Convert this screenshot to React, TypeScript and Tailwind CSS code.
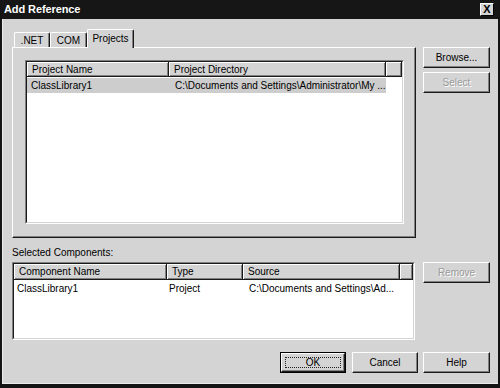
import React from 'react';

const font = { fontFamily: '"Liberation Sans", Arial, sans-serif' };

function Button({ label, disabled = false, isDefault = false, className = '' }: { label: string; disabled?: boolean; isDefault?: boolean; className?: string }) {
  const face = (
    <div className="h-full w-full flex items-center justify-center bg-[#d4d4d4] border border-t-white border-l-white border-r-[#1a1a1a] border-b-[#1a1a1a] shadow-[inset_-1px_-1px_0_#808080]">
      {isDefault ? (
        <span className="flex items-center justify-center w-[calc(100%-6px)] h-[calc(100%-6px)] border border-dotted border-[#222]">{label}</span>
      ) : (
        <span className={disabled ? 'text-[#9a9a9a] [text-shadow:1px_1px_0_#ffffff]' : ''}>{label}</span>
      )}
    </div>
  );
  if (isDefault) {
    return <div className={`h-[21px] border border-black ${className}`}>{face}</div>;
  }
  return <div className={`h-[21px] ${className}`}>{face}</div>;
}

function HeaderCell({ label, width }: { label?: string; width?: number }) {
  return (
    <div
      className={`h-full flex items-center pl-[5px] bg-[#d4d4d4] border-r border-b border-r-[#1a1a1a] border-b-[#1a1a1a] shadow-[inset_1px_1px_0_#ffffff,inset_-1px_-1px_0_#808080] whitespace-nowrap overflow-hidden ${width ? 'shrink-0' : 'flex-1'}`}
      style={width ? { width } : undefined}
    >
      {label}
    </div>
  );
}

function Sunken({ children, className = '' }: { children: React.ReactNode; className?: string }) {
  return (
    <div className={`border border-t-[#808080] border-l-[#808080] border-r-white border-b-white ${className}`}>
      <div className="h-full border border-t-[#1a1a1a] border-l-[#1a1a1a] border-r-[#d4d4d4] border-b-[#d4d4d4] bg-white flex flex-col overflow-hidden">
        {children}
      </div>
    </div>
  );
}

function Tab({ label, active = false, width }: { label: string; active?: boolean; width: number }) {
  return (
    <div
      className={`flex items-center justify-center bg-[#d4d4d4] border-t border-l border-t-white border-l-white border-r border-r-[#1a1a1a] shadow-[inset_-1px_0_0_#808080] rounded-t-[2px] ${
        active ? 'h-[19px] -mb-px relative z-10 pb-[2px]' : 'h-[15px]'
      }`}
      style={{ width }}
    >
      {label}
    </div>
  );
}

export default function App() {
  return (
    <div className="w-[500px] h-[388px] bg-[#d4d4d4] border-2 border-t-0 border-b-[4px] border-[#141414] flex flex-col text-[10px] text-black" style={font}>
      {/* title bar */}
      <div className="h-[19px] shrink-0 bg-[#161616] flex items-center justify-between pl-[2px] pr-[4px]">
        <span className="text-white font-bold text-[11px] tracking-[-0.1px]">Add Reference</span>
        <div className="w-[14px] h-[13px] bg-[#d4d4d4] border border-t-white border-l-white border-r-black border-b-black flex items-center justify-center text-[11px] font-bold leading-none">
          X
        </div>
      </div>

      <div className="flex-1 flex flex-col pl-[9px] border-l border-b border-[#ececec]">
        {/* tabs */}
        <div className="flex items-end h-[28px] pl-[2px]">
          <Tab label=".NET" width={36} />
          <Tab label="COM" width={37} />
          <Tab label="Projects" width={47} active />
        </div>

        {/* tab panel + side buttons */}
        <div className="flex items-start">
          <div className="w-[404px] h-[191px] border border-t-white border-l-white border-r-[#1a1a1a] border-b-[#1a1a1a] shadow-[inset_-1px_-1px_0_#808080] pl-[12px] pr-[11px] pt-[12px] pb-[13px]">
            <Sunken className="h-full">
              <div className="h-[15px] flex shrink-0">
                <HeaderCell label="Project Name" width={142} />
                <HeaderCell label="Project Directory" width={217} />
                <HeaderCell />
              </div>
              <div className="h-[15px] w-[359px] flex items-center bg-[#cdcdcd] mt-px">
                <span className="w-[143px] pl-[4px]">ClassLibrary1</span>
                <span className="pl-[5px] whitespace-nowrap">C:\Documents and Settings\Administrator\My ...</span>
              </div>
            </Sunken>
          </div>
          <div className="ml-[7px] w-[67px] flex flex-col gap-[4px]">
            <Button label="Browse..." />
            <Button label="Select" disabled />
          </div>
        </div>

        {/* selected components */}
        <div className="pt-[9px] leading-[12px]">Selected Components:</div>

        <div className="flex items-start mt-[3px]">
          <Sunken className="w-[403px] h-[78px]">
            <div className="h-[16px] flex shrink-0">
              <HeaderCell label="Component Name" width={153} />
              <HeaderCell label="Type" width={76} />
              <HeaderCell label="Source" width={157} />
              <HeaderCell />
            </div>
            <div className="h-[15px] flex items-center mt-px">
              <span className="w-[155px] pl-[3px]">ClassLibrary1</span>
              <span className="w-[80px]">Project</span>
              <span className="whitespace-nowrap">C:\Documents and Settings\Ad...</span>
            </div>
          </Sunken>
          <Button label="Remove" disabled className="ml-[8px] w-[67px]" />
        </div>

        {/* dialog buttons */}
        <div className="flex justify-end mt-[12px] pr-[8px]">
          <Button label="OK" isDefault className="w-[66px]" />
          <Button label="Cancel" className="w-[66px] ml-[6px]" />
          <Button label="Help" className="w-[67px] ml-[5px]" />
        </div>
      </div>
    </div>
  );
}
